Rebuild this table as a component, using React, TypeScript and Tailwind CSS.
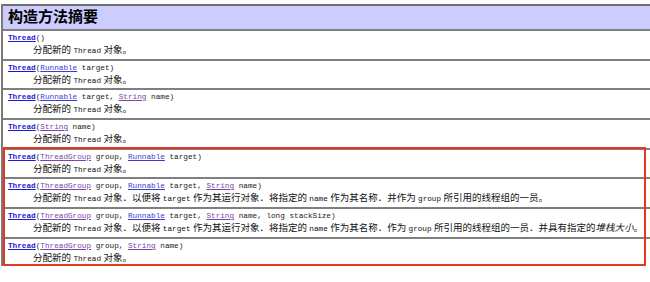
import React from "react";

const mono = "font-['Liberation_Mono','Courier_New',monospace]";
const cjk = "font-['Liberation_Serif','Noto_Sans_CJK_SC',serif]";

type Part = { t: string; k?: "blue" | "purple" };

const L = (t: string): Part => ({ t, k: "blue" });
const P = (t: string): Part => ({ t, k: "purple" });
const T = (t: string): Part => ({ t });

type Desc = { t: string; m?: boolean; i?: boolean };

const rows: { h: number; sig: Part[]; desc: Desc[] }[] = [
  { h: 30, sig: [T("()")], desc: [{ t: "分配新的 " }, { t: "Thread", m: true }, { t: " 对象。" }] },
  { h: 29, sig: [T("("), L("Runnable"), T(" target)")], desc: [{ t: "分配新的 " }, { t: "Thread", m: true }, { t: " 对象。" }] },
  { h: 30, sig: [T("("), L("Runnable"), T(" target, "), P("String"), T(" name)")], desc: [{ t: "分配新的 " }, { t: "Thread", m: true }, { t: " 对象。" }] },
  { h: 30, sig: [T("("), P("String"), T(" name)")], desc: [{ t: "分配新的 " }, { t: "Thread", m: true }, { t: " 对象。" }] },
  { h: 29, sig: [T("("), P("ThreadGroup"), T(" group, "), L("Runnable"), T(" target)")], desc: [{ t: "分配新的 " }, { t: "Thread", m: true }, { t: " 对象。" }] },
  {
    h: 30,
    sig: [T("("), P("ThreadGroup"), T(" group, "), L("Runnable"), T(" target, "), P("String"), T(" name)")],
    desc: [
      { t: "分配新的 " }, { t: "Thread", m: true }, { t: " 对象．以便将 " }, { t: "target", m: true },
      { t: " 作为其运行对象．将指定的 " }, { t: "name", m: true }, { t: " 作为其名称．并作为 " },
      { t: "group", m: true }, { t: " 所引用的线程组的一员。" },
    ],
  },
  {
    h: 30,
    sig: [T("("), P("ThreadGroup"), T(" group, "), L("Runnable"), T(" target, "), P("String"), T(" name, long stackSize)")],
    desc: [
      { t: "分配新的 " }, { t: "Thread", m: true }, { t: " 对象．以便将 " }, { t: "target", m: true },
      { t: " 作为其运行对象．将指定的 " }, { t: "name", m: true }, { t: " 作为其名称．作为 " },
      { t: "group", m: true }, { t: " 所引用的线程组的一员．并具有指定的" }, { t: "堆栈大小", i: true }, { t: "。" },
    ],
  },
  { h: 29, sig: [T("("), P("ThreadGroup"), T(" group, "), P("String"), T(" name)")], desc: [{ t: "分配新的 " }, { t: "Thread", m: true }, { t: " 对象。" }] },
];

export default function App() {
  return (
    <div className="relative w-[650px] h-[282px] overflow-hidden bg-white pt-[4px] pl-[1px]">
      <div className="w-[700px] border-l-2 border-[#7a7a7a]">
        <div className={`h-[25px] border-t-2 border-[#6e6e6e] bg-[#ccccff] flex items-center pl-[5px] text-[15px] font-bold text-black leading-none ${cjk}`}>
          构造方法摘要
        </div>
        {rows.map((r, idx) => (
          <div
            key={idx}
            className="border-t-2 border-[#7f7f7f] bg-white pl-[5px]"
            style={{ height: r.h }}
          >
            <div className={`pt-[2px] h-[12px] text-[7.7px] leading-[10px] text-[#222] whitespace-nowrap ${mono}`}>
              <span className="font-bold text-[#1a1ad6] underline">Thread</span>
              {r.sig.map((p, j) =>
                p.k ? (
                  <span key={j} className={p.k === "blue" ? "text-[#3b3bd4] underline" : "text-[#7a45a8] underline"}>
                    {p.t}
                  </span>
                ) : (
                  <span key={j} className="whitespace-pre">{p.t}</span>
                )
              )}
            </div>
            <div className={`pl-[25px] text-[9.5px] leading-[15px] text-[#111] whitespace-nowrap ${cjk}`}>
              {r.desc.map((d, j) =>
                d.m ? (
                  <span key={j} className={`text-[7.7px] ${mono}`}>{d.t}</span>
                ) : d.i ? (
                  <span key={j} className="italic">{d.t}</span>
                ) : (
                  <span key={j} className="whitespace-pre">{d.t}</span>
                )
              )}
            </div>
          </div>
        ))}
      </div>
      <div className="absolute left-[3px] top-[147px] w-[643px] h-[119px] border-2 border-[#e4371f] pointer-events-none" />
    </div>
  );
}
